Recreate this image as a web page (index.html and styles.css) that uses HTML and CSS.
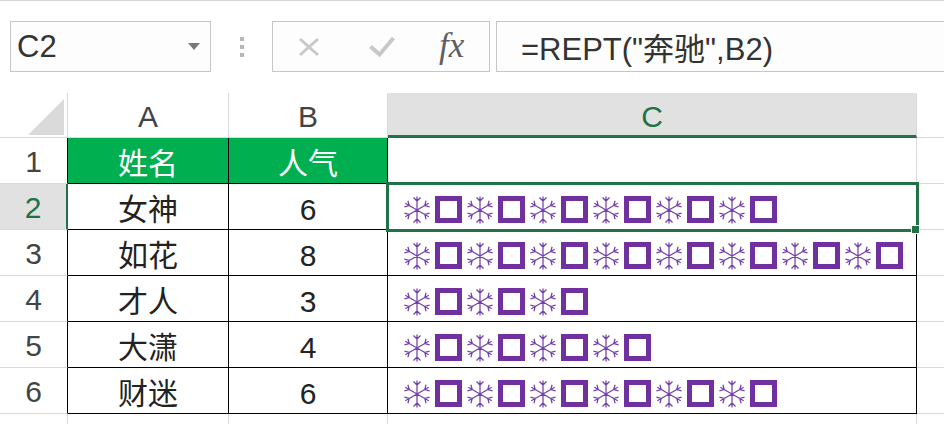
FILE: index.html
```html
<!DOCTYPE html>
<html lang="zh-CN">
<head>
    <meta charset="UTF-8" />
    <meta name="viewport" content="width=device-width, initial-scale=1" />
    <title>REPT</title>
    <link rel="stylesheet" href="styles.css">
</head>
<body>
    <svg class="defs" width="0" height="0">
        <symbol id="flake" viewBox="-13 -14 26 28">
            <path fill="none" stroke="#7440ac" stroke-width="1.25"
                  d="M0 -13.5V13.5M-11.69 -6.75L11.69 6.75M-11.69 6.75L11.69 -6.75
                     M-3.5 -12.5L0 -9L3.5 -12.5
                     M9.08 -9.28L7.79 -4.5L12.58 -3.22
                     M12.58 3.22L7.79 4.5L9.08 9.28
                     M-3.5 12.5L0 9L3.5 12.5
                     M-9.08 9.28L-7.79 4.5L-12.58 3.22
                     M-12.58 -3.22L-7.79 -4.5L-9.08 -9.28" />
        </symbol>
    </svg>

    <div class="toolbar">
        <div class="namebox"><span>C2</span><span class="arrow"></span></div>
        <div class="grip"><i></i><i></i><i></i></div>
        <div class="fxbox">
            <svg class="icon-x" width="22" height="20" viewBox="0 0 22 20">
                <path d="M2 2L20 18M20 2L2 18" stroke="#c8c8c8" stroke-width="3" fill="none" />
            </svg>
            <svg class="icon-check" width="26" height="21" viewBox="0 0 26 21">
                <path d="M1.5 10.5L10.5 18.5L24.5 2" stroke="#c8c8c8" stroke-width="4" fill="none" />
            </svg>
            <span class="fx">fx</span>
        </div>
        <div class="formula">=REPT("奔驰",B2)</div>
    </div>

    <div class="sheet">
        <div class="corner"><div class="tri"></div></div>
        <div class="colhead">A</div>
        <div class="colhead">B</div>
        <div class="colhead sel">C</div>
        <div class="colhead rest"></div>

        <div class="rowhead edge">1</div>
        <div class="cell tb title">姓名</div>
        <div class="cell tb title">人气</div>
        <div class="cell c1"></div>
        <div class="cell rest"></div>

        <div class="rowhead edge sel">2</div>
        <div class="cell tb">女神</div>
        <div class="cell tb">6</div>
        <div class="cell tb rept active" data-count="6"></div>
        <div class="cell rest"></div>

        <div class="rowhead edge">3</div>
        <div class="cell tb">如花</div>
        <div class="cell tb">8</div>
        <div class="cell tb rept" data-count="8"></div>
        <div class="cell rest"></div>

        <div class="rowhead edge">4</div>
        <div class="cell tb">才人</div>
        <div class="cell tb">3</div>
        <div class="cell tb rept" data-count="3"></div>
        <div class="cell rest"></div>

        <div class="rowhead edge">5</div>
        <div class="cell tb">大潇</div>
        <div class="cell tb">4</div>
        <div class="cell tb rept" data-count="4"></div>
        <div class="cell rest"></div>

        <div class="rowhead edge">6</div>
        <div class="cell tb">财迷</div>
        <div class="cell tb">6</div>
        <div class="cell tb rept" data-count="6"></div>
        <div class="cell rest"></div>

        <div class="rowhead"></div>
        <div class="cell"></div>
        <div class="cell"></div>
        <div class="cell"></div>
        <div class="cell rest"></div>
    </div>

    <script>
      // =REPT("奔驰", B) -> snowflake + square, B times
      document.querySelectorAll('.rept').forEach(function (cell) {
        var n = Number(cell.dataset.count);
        var html = '';
        for (var i = 0; i < n; i++) {
          html += '<svg class="flake"><use href="#flake"/></svg><span class="box"></span>';
        }
        cell.innerHTML = html;
      });
    </script>
</body>
</html>
```

FILE: styles.css
```css
body {
    margin: 0;
    font-family: "Liberation Sans", "Noto Sans CJK SC", Arial, sans-serif;
    background-color: #ffffff;
    color: #222;
    overflow: hidden;
}
.defs {
    display: block;
    width: 0;
    height: 0;
    overflow: hidden;
}

/* formula bar */
.toolbar {
    display: flex;
    align-items: flex-start;
    box-sizing: border-box;
    height: 93px;
    padding: 20px 0 0 10px;
    border-top: 1px solid #d4d4d4;
}
.namebox,
.fxbox,
.formula {
    box-sizing: border-box;
    height: 51px;
    border: 1px solid #c6c6c6;
    background-color: #fdfdfd;
    display: flex;
    align-items: center;
}
.namebox {
    width: 201px;
    justify-content: space-between;
    padding: 0 10px 0 6px;
    font-size: 31px;
    color: #333;
}
.arrow {
    width: 0;
    height: 0;
    border-left: 6.5px solid transparent;
    border-right: 6.5px solid transparent;
    border-top: 7px solid #787878;
}
.grip {
    width: 61px;
    height: 51px;
    display: flex;
    flex-direction: column;
    align-items: center;
    justify-content: center;
    gap: 4px;
}
.grip i {
    width: 4px;
    height: 4px;
    background-color: #b8b8b8;
}
.fxbox {
    width: 218px;
    padding-left: 25px;
}
.icon-check {
    margin-left: 49px;
}
.fx {
    margin-left: 44px;
    margin-top: -2px;
    font-family: "Liberation Serif", serif;
    font-style: italic;
    font-size: 35px;
    color: #5f5f5f;
}
.formula {
    flex: 1;
    margin-left: 6px;
    border-right: none;
    padding-left: 24px;
    font-size: 31px;
    color: #333;
}

/* sheet */
.sheet {
    display: grid;
    grid-template-columns: 68px 161px 159px 529px 1fr;
    grid-template-rows: 45px repeat(7, 46px);
}
.sheet > div {
    box-sizing: border-box;
    border-right: 1px solid #d9d9d9;
    border-bottom: 1px solid #d9d9d9;
    font-size: 30px;
    line-height: 30px;
    text-align: center;
}
.corner {
    display: flex;
    justify-content: flex-end;
    align-items: flex-end;
    padding: 0 3px 2px 0;
}
.tri {
    width: 36px;
    height: 36px;
    background-color: #dadada;
    clip-path: polygon(100% 0, 100% 100%, 0 100%);
}
.colhead {
    padding-top: 9px;
    color: #444;
}
.colhead.sel {
    background-color: #e1e1e1;
    color: #217346;
    border-bottom: 3px solid #217346;
}
.sheet > .rest {
    border-right: none;
}
.rowhead {
    padding-top: 9px;
    color: #444;
}
.sheet > .edge {
    border-right-color: #000;
}
.sheet > .rowhead.sel {
    background-color: #e1e1e1;
    color: #217346;
    border-right: 2px solid #217346;
}
.cell {
    padding-top: 11px;
}
.sheet > .tb {
    border-right-color: #000;
    border-bottom-color: #000;
}
.sheet > .c1 {
    border-bottom-color: #000;
}
.title {
    background-color: #00b050;
    color: #fff;
}

/* repeated glyphs */
.sheet > .rept {
    display: flex;
    align-items: flex-start;
    gap: 5px;
    padding: 12px 0 0 16px;
}
.flake {
    width: 26px;
    height: 28px;
    flex: none;
}
.box {
    box-sizing: border-box;
    width: 27px;
    height: 27px;
    border: 5px solid #7030a0;
    background-color: #fff;
    flex: none;
}
.active {
    position: relative;
    outline: 3px solid #217346;
    outline-offset: -1px;
    z-index: 1;
}
.active::after {
    content: "";
    position: absolute;
    right: -4px;
    bottom: -5px;
    width: 7px;
    height: 7px;
    background-color: #217346;
    border: 1px solid #fff;
}
```
